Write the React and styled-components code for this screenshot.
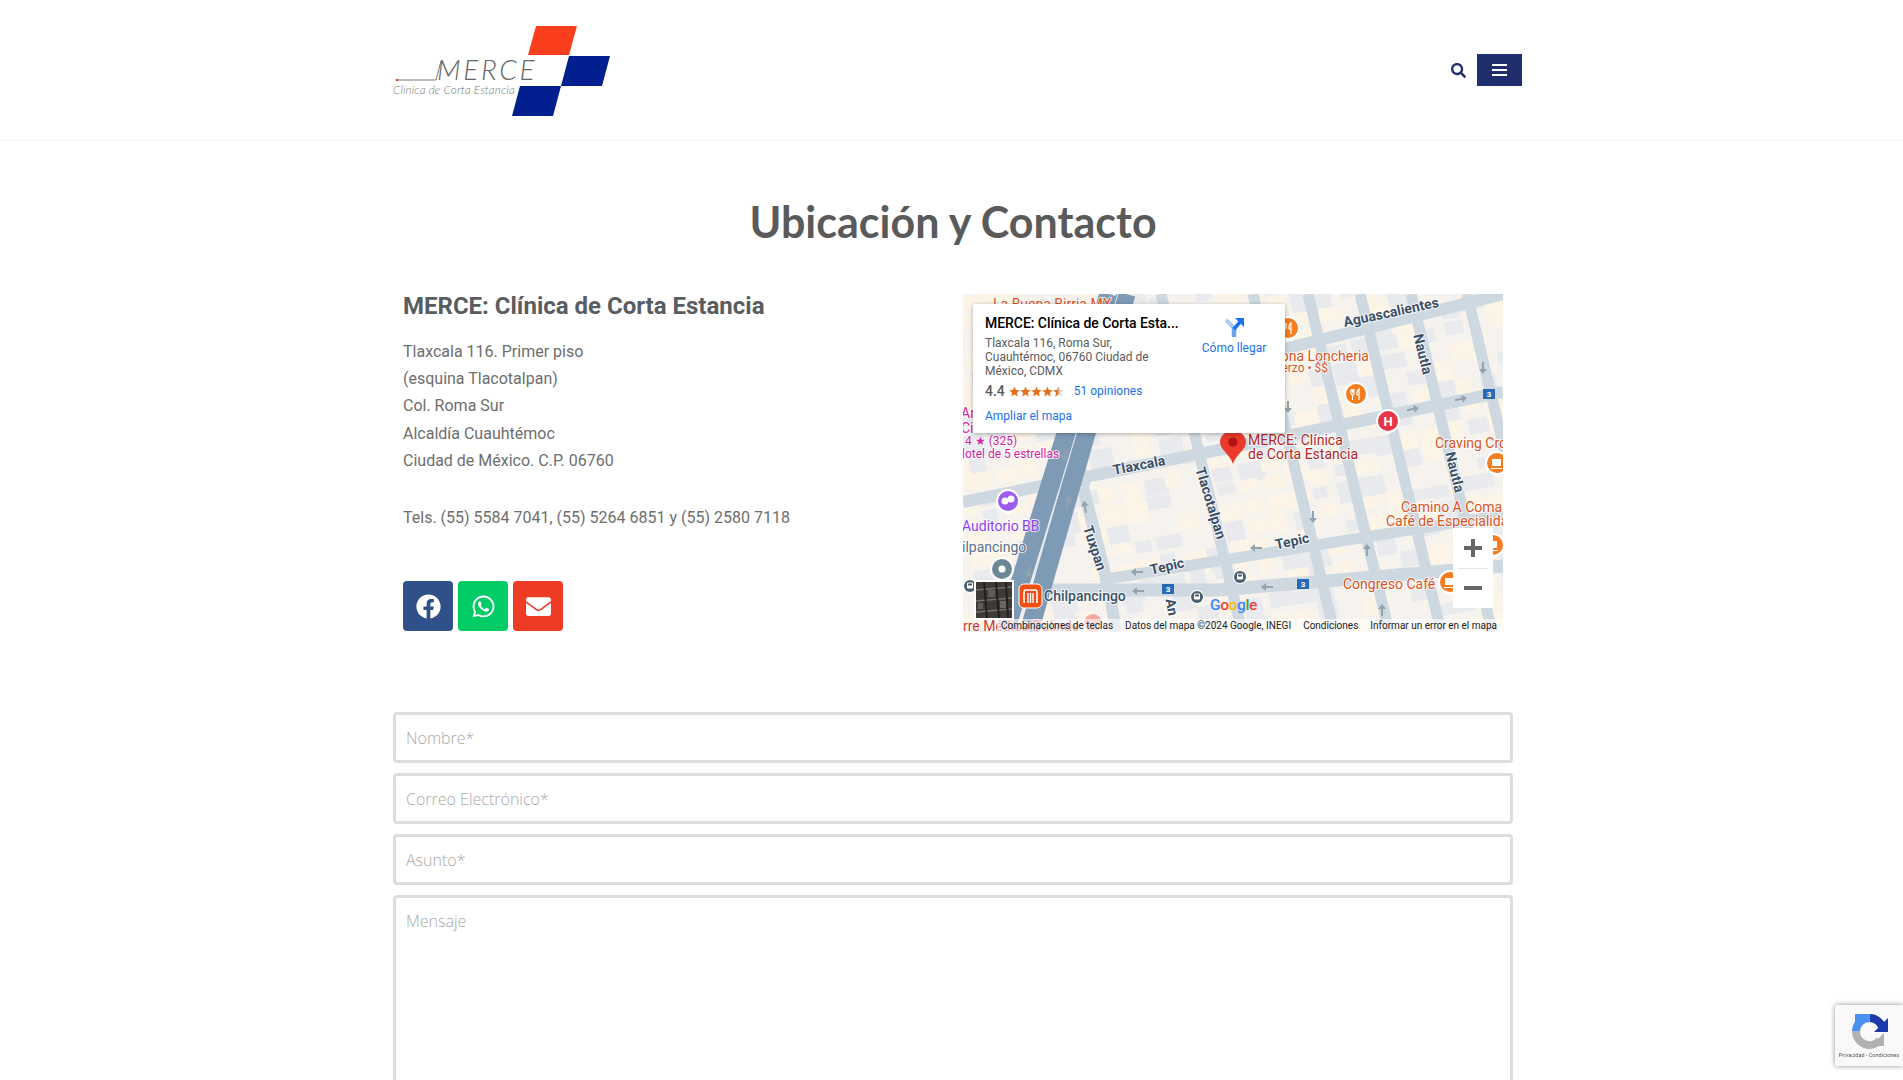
import React from 'react';
import styled, { createGlobalStyle } from 'styled-components';
import { FaFacebook, FaWhatsapp, FaEnvelope, FaSearch } from 'react-icons/fa';

const GlobalStyle = createGlobalStyle`
  html, body {
    margin: 0;
    padding: 0;
    background: #fff;
    font-family: Roboto, "Liberation Sans", sans-serif;
    overflow-x: hidden;
  }
  * { box-sizing: border-box; }
`;

const Header = styled.header`
  height: 141px;
  border-bottom: 1px solid #f6f6f6;
`;

const HeaderInner = styled.div`
  width: 1130px;
  height: 140px;
  margin-left: 392px;
  display: flex;
  align-items: center;
  justify-content: space-between;
`;

const HeaderTools = styled.div`
  display: flex;
  align-items: center;
  gap: 11px;
  color: #202e6e;
`;

const MenuButton = styled.button`
  width: 45px;
  height: 32px;
  padding: 0;
  border: 0;
  background: #202e6e;
  display: flex;
  flex-direction: column;
  align-items: center;
  justify-content: center;
  gap: 3px;
`;

const MenuBar = styled.span`
  display: block;
  width: 15px;
  height: 2px;
  background: #fff;
`;

const Main = styled.main`
  width: 1120px;
  margin-left: 393px;
`;

const Title = styled.h1`
  margin: 54px 0 0;
  text-align: center;
  font-family: Lato, "Open Sans", sans-serif;
  font-weight: 700;
  font-size: 43px;
  line-height: 54px;
  color: #5a5a5a;
`;

const Columns = styled.section`
  display: grid;
  grid-template-columns: 560px 560px;
  margin-top: 45px;
`;

const InfoColumn = styled.div`
  padding: 0 10px;
`;

const ClinicName = styled.h2`
  margin: 0;
  font-size: 24px;
  line-height: 25px;
  font-weight: 700;
  color: #595c61;
`;

const Address = styled.p`
  margin: 19px 0 0;
  font-size: 16px;
  line-height: 27.2px;
  color: #6e6e6e;
`;

const Phones = styled.p`
  margin: 30px 0 0;
  font-size: 16px;
  line-height: 27.2px;
  color: #6e6e6e;
`;

const SocialRow = styled.div`
  display: flex;
  gap: 5px;
  margin-top: 50px;
`;

const SocialButton = styled.a`
  width: 50px;
  height: 50px;
  border-radius: 4px;
  background: ${p => p.$bg};
  color: #fff;
  display: flex;
  align-items: center;
  justify-content: center;
  font-size: 25px;
`;

const MapColumn = styled.div`
  padding: 0 10px;
`;

const MapFrame = styled.div`
  position: relative;
  width: 540px;
  height: 338px;
  overflow: hidden;
  background: #f6f3ee;
`;

const MapSvg = styled.svg`
  display: block;
  font-family: Roboto, "Liberation Sans", sans-serif;
`;

const MapLabel = styled.text`
  font-size: ${p => p.$size || 14}px;
  font-weight: ${p => p.$weight || 400};
  fill: ${p => p.$color || '#3c4f66'};
  stroke: #fff;
  stroke-width: 2px;
  stroke-opacity: 0.8;
  paint-order: stroke;
  stroke-linejoin: round;
`;

const InfoCard = styled.div`
  position: absolute;
  left: 10px;
  top: 10px;
  width: 312px;
  height: 129px;
  background: #fff;
  box-shadow: 0 1px 4px rgba(0, 0, 0, 0.3);
  border-radius: 2px;
  padding: 10px 0 0 12px;
  display: grid;
  grid-template-columns: 198px 102px;
`;

const CardTitle = styled.div`
  font-size: 14px;
  line-height: 18px;
  font-weight: 500;
  color: #000;
  white-space: nowrap;
  letter-spacing: -0.05px;
`;

const CardAddress = styled.div`
  margin-top: 4px;
  font-size: 12px;
  line-height: 14px;
  color: #5b5b5b;
`;

const RatingRow = styled.div`
  display: flex;
  align-items: center;
  margin-top: 5px;
  height: 16px;
`;

const RatingValue = styled.span`
  font-size: 14px;
  font-weight: 500;
  color: #5b5b5b;
  margin-right: 4px;
`;

const CardLink = styled.a`
  font-size: 12px;
  color: #1a73e8;
  white-space: nowrap;
`;

const ReviewsLink = styled(CardLink)`
  margin-left: 10px;
`;

const EnlargeLink = styled(CardLink)`
  display: block;
  margin-top: 10px;
  line-height: 14px;
`;

const Directions = styled.div`
  display: flex;
  flex-direction: column;
  align-items: center;
  gap: 4px;
  padding-top: 3px;
`;

const ZoomControls = styled.div`
  position: absolute;
  right: 10px;
  top: 234px;
  width: 40px;
  height: 80px;
  background: #fff;
  display: flex;
  flex-direction: column;
`;

const ZoomButton = styled.div`
  flex: 1;
  display: flex;
  align-items: center;
  justify-content: center;
  border-top: ${p => (p.$divided ? '1px solid #e6e6e6' : '0')};
  margin: 0 5px;
`;

const Thumbnail = styled.div`
  position: absolute;
  left: 11px;
  top: 286px;
  width: 40px;
  height: 40px;
  border: 2px solid #fff;
  background: #35312f;
  overflow: hidden;
`;

const Attribution = styled.div`
  position: absolute;
  left: 34px;
  right: 0;
  top: 325px;
  height: 13px;
  display: flex;
  align-items: center;
  padding-left: 4px;
  background: rgba(255, 255, 255, 0.6);
  font-size: 10px;
  line-height: 13px;
  color: #222;
  white-space: nowrap;
`;

const AttributionItem = styled.span`
  margin-left: ${p => p.$gap || 0}px;
`;

const ContactForm = styled.form`
  display: flex;
  flex-direction: column;
  gap: 10px;
  margin-top: 80px;
`;

const fieldStyles = `
  display: block;
  width: 100%;
  border: 3px solid #ddd;
  border-radius: 4px;
  background: #fff;
  padding: 0 10px;
  font-family: "Open Sans", Lato, sans-serif;
  font-weight: 300;
  font-size: 16px;
  color: #555;
  outline: 0;
  &::placeholder { color: #a9a9a9; opacity: 1; }
`;

const TextField = styled.input`
  ${fieldStyles}
  height: 51px;
`;

const MessageField = styled.textarea`
  ${fieldStyles}
  height: 230px;
  padding-top: 12px;
  resize: none;
`;

const RecaptchaBadge = styled.div`
  position: fixed;
  right: 0;
  top: 1005px;
  width: 68px;
  height: 61px;
  background: #f9f9f9;
  border-radius: 2px 0 0 2px;
  box-shadow: 0 0 5px rgba(128, 128, 128, 0.9);
  display: flex;
  flex-direction: column;
  align-items: center;
  padding-top: 8px;
`;

const RecaptchaText = styled.span`
  font-size: 5.5px;
  line-height: 9px;
  margin-top: 1px;
  color: #555;
  white-space: nowrap;
`;

const Logo = () => (
  <svg width="222" height="100" viewBox="392 20 222 100">
    <polygon points="536,26 577,26 569,55 528,55" fill="#fb3e1e" />
    <polygon points="569,56 610,56 602,86 561,86" fill="#011f8f" />
    <polygon points="520,86 561,86 553,116 512,116" fill="#011f8f" />
    <circle cx="397" cy="80" r="1.3" fill="#fb3e1e" />
    <path d="M398 80 H436 L441 61" fill="none" stroke="#777" strokeWidth="1" />
    <text
      x="437"
      y="80"
      fontFamily="Lato, sans-serif"
      fontStyle="italic"
      fontWeight="300"
      fontSize="28"
      letterSpacing="2.6"
      fill="#666"
    >
      MERCE
    </text>
    <text
      x="393"
      y="94"
      fontFamily="Lato, sans-serif"
      fontStyle="italic"
      fontWeight="300"
      fontSize="11.6"
      letterSpacing="0.15"
      fill="#777"
    >
      Clínica de Corta Estancia
    </text>
  </svg>
);

const buildings = (() => {
  let seed = 17;
  const rand = () => {
    seed = (seed * 9301 + 49297) % 233280;
    return seed / 233280;
  };
  const list = [];
  for (let u = -80; u < 640; u += 23) {
    for (let v = 0; v < 460; v += 19) {
      const r = rand();
      if (r > 0.75) continue;
      list.push({
        u: u + rand() * 4,
        v: v + rand() * 4,
        w: 14 + rand() * 12,
        h: 10 + rand() * 12,
        fill: r < 0.36 ? '#e8eaee' : '#fcf4e7',
      });
    }
  }
  return list;
})();

const eastWestRoads = [
  [230, 78, 540, 0, 12],
  [0, 208, 540, 98, 12],
  [137, 286, 540, 221, 11],
  [87, 296, 257, 296, 13],
  [257, 296, 540, 272, 13],
];

const northSouthRoads = [198, 290, 345, 397, 448, 504].map(x0 => [
  x0,
  0,
  x0 + 0.24 * 338,
  338,
  11,
]);

const arrows = [
  [325, 113, 90],
  [450, 115, -12],
  [498, 105, -12],
  [520, 74, 90],
  [105, 208, -70],
  [122, 213, -100],
  [66, 278, 110],
  [174, 278, 180],
  [175, 297, 180],
  [350, 223, 90],
  [293, 254, 180],
  [404, 256, -90],
  [304, 293, 180],
  [419, 316, -90],
  [102, 161, 110],
];

const roadLabels = [
  ['Aguascalientes', 428, 23, -12],
  ['Nautla', 460, 65, 76],
  ['Nautla', 492, 183, 76],
  ['Tlaxcala', 176, 176, -11],
  ['Tlacotalpan', 248, 214, 73],
  ['Tuxpan', 132, 259, 72],
  ['Tepic', 204, 277, -13],
  ['Tepic', 329, 252, -12],
  ['An', 209, 318, 80],
];

const shields = [
  [526, 100],
  [205, 295],
  [340, 290],
];

const restaurantMarkers = [
  [325, 34],
  [393, 100],
];

const cafeMarkers = [
  [534, 169],
  [487, 288],
  [530, 251],
];

const busStops = [
  [277, 283],
  [234, 303],
  [7, 292],
];

const OneWayArrow = ({ x, y, angle }) => (
  <path
    d="M-6 -1 H1 V-4 L6 0 L1 4 V1 H-6 Z"
    fill="#93a3ae"
    transform={`translate(${x} ${y}) rotate(${angle})`}
  />
);

const Marker = ({ x, y, color, children }) => (
  <g transform={`translate(${x} ${y})`}>
    <path d="M-7 8 L0 14 L7 8 Z" fill="#fff" />
    <circle r="12" fill="#fff" />
    <circle r="10" fill={color} />
    {children}
  </g>
);

const MapDrawing = () => (
  <MapSvg width="540" height="338" viewBox="0 0 540 338">
    <rect width="540" height="338" fill="#f6f3ee" />
    <g transform="matrix(1 -0.19 0.24 1 0 0)">
      {buildings.map((b, i) => (
        <rect key={i} x={b.u} y={b.v} width={b.w} height={b.h} fill={b.fill} />
      ))}
    </g>
    {eastWestRoads.concat(northSouthRoads).map(([x1, y1, x2, y2, w], i) => (
      <line
        key={i}
        x1={x1}
        y1={y1}
        x2={x2}
        y2={y2}
        stroke="#cdd8e1"
        strokeWidth={w}
      />
    ))}
    <path
      d="M120 193 Q124 182 116 178 M120 193 L147 299 L153 338"
      fill="none"
      stroke="#cdd8e1"
      strokeWidth="12"
    />
    <line x1="146" y1="0" x2="42" y2="338" stroke="#7e9ab5" strokeWidth="19" />
    <line x1="163" y1="0" x2="66" y2="338" stroke="#7e9ab5" strokeWidth="19" />
    <line x1="155" y1="0" x2="54" y2="338" stroke="#e2e8ee" strokeWidth="1" />

    {arrows.map(([x, y, a], i) => (
      <OneWayArrow key={i} x={x} y={y} angle={a} />
    ))}

    {shields.map(([x, y], i) => (
      <g key={i}>
        <rect x={x - 6} y={y - 5} width="12" height="10" fill="#2a6ab5" />
        <text
          x={x}
          y={y + 3}
          textAnchor="middle"
          fontSize="8"
          fontWeight="700"
          fill="#fff"
        >
          3
        </text>
      </g>
    ))}

    {roadLabels.map(([t, x, y, a], i) => (
      <MapLabel
        key={i}
        x={x}
        y={y}
        $weight={700}
        textAnchor="middle"
        transform={`rotate(${a} ${x} ${y - 5})`}
      >
        {t}
      </MapLabel>
    ))}

    <MapLabel x="30" y="15" $color="#d9541e">
      La Buena Birria MX
    </MapLabel>
    <MapLabel x="406" y="67" textAnchor="end" $color="#d9541e">
      ona Loncheria
    </MapLabel>
    <MapLabel x="365" y="78" $size={12} textAnchor="end" $color="#d9541e">
      erzo • $$
    </MapLabel>
    <MapLabel x="472" y="154" $color="#d9541e">
      Craving Cro
    </MapLabel>
    <MapLabel x="438" y="218" $color="#d9541e">
      Camino A Coma
    </MapLabel>
    <MapLabel x="423" y="232" $color="#d9541e">
      Café de Especialida
    </MapLabel>
    <MapLabel x="380" y="295" $color="#d9541e">
      Congreso Café
    </MapLabel>

    <MapLabel x="285" y="151" $color="#b3261e">
      MERCE: Clínica
    </MapLabel>
    <MapLabel x="285" y="165" $color="#b3261e">
      de Corta Estancia
    </MapLabel>

    <MapLabel x="-2" y="124" $color="#d6249f">
      An
    </MapLabel>
    <MapLabel x="-2" y="139" $color="#d6249f">
      Cit
    </MapLabel>
    <MapLabel x="2" y="151" $size={12} $color="#d6249f">
      4 ★ (325)
    </MapLabel>
    <MapLabel x="-1" y="164" $size={12} $color="#d6249f">
      lotel de 5 estrellas
    </MapLabel>
    <MapLabel x="-1" y="237" $color="#8a3ff0">
      Auditorio BB
    </MapLabel>
    <MapLabel x="-1" y="258" $color="#5a7186">
      ilpancingo
    </MapLabel>
    <MapLabel x="81" y="307" $weight={500} $color="#3c5267">
      Chilpancingo
    </MapLabel>
    <MapLabel x="0" y="337" $color="#d0342c">
      rre Médica Dalinde
    </MapLabel>

    {restaurantMarkers.map(([x, y], i) => (
      <Marker key={i} x={x} y={y} color="#f57c1f">
        <path
          d="M-5 -5 V-1 Q-5 1 -3.5 1 V6 M-3.5 -5 V-1 M-2 -5 V-1 Q-2 1 -3.5 1 M3 6 V-5 Q0.5 -3 1 1 H3"
          fill="none"
          stroke="#fff"
          strokeWidth="1.2"
        />
      </Marker>
    ))}
    {cafeMarkers.map(([x, y], i) => (
      <Marker key={i} x={x} y={y} color="#f57c1f">
        <path d="M-5 -4 H4 V2 Q4 3 3 3 H-4 Q-5 3 -5 2 Z M-6 5 H5 V6 H-6 Z" fill="#fff" />
      </Marker>
    ))}
    <Marker x={425} y={127} color="#e8344a">
      <text y="5" textAnchor="middle" fontSize="13" fontWeight="700" fill="#fff">
        H
      </text>
    </Marker>
    <Marker x={45} y={207} color="#9c5cf0">
      <circle cx="-3" cy="0" r="3.5" fill="#fff" />
      <circle cx="3" cy="-2" r="3.5" fill="#fff" />
    </Marker>
    <Marker x={39} y={275} color="#6e8794">
      <circle r="3.5" fill="#fff" />
    </Marker>
    {busStops.map(([x, y], i) => (
      <g key={i}>
        <circle cx={x} cy={y} r="7" fill="#fff" />
        <circle cx={x} cy={y} r="6" fill="#4a5f70" />
        <rect x={x - 3} y={y - 3.5} width="6" height="6" rx="1" fill="#fff" />
        <rect x={x - 2} y={y - 2.5} width="4" height="2" fill="#4a5f70" />
      </g>
    ))}

    <g transform="translate(56 290)">
      <rect width="23" height="24" rx="5" fill="#f04e14" stroke="#fff" strokeWidth="1" />
      <path d="M5 19 V8 Q5 6 7 6 H16 Q18 6 18 8 V19" fill="none" stroke="#fff" strokeWidth="1.6" />
      <path d="M9 19 V9 M11.5 19 V9 M14 19 V9" stroke="#fff" strokeWidth="1.4" />
    </g>

    <g transform="translate(270 137)">
      <path
        d="M0 0 C-8 0 -13 5 -13 11 C-13 19 -3 23 0 33 C3 23 13 19 13 11 C13 5 8 0 0 0 Z"
        fill="#ea3a2d"
      />
      <circle cy="11" r="4.6" fill="#b31412" />
    </g>

    <circle cx="130" cy="329" r="9" fill="#f4a9a4" />

    <text x="247" y="316" fontSize="15.5" fontWeight="500" letterSpacing="-0.4">
      <tspan fill="#4285f4">G</tspan>
      <tspan fill="#ea4335">o</tspan>
      <tspan fill="#fbbc05">o</tspan>
      <tspan fill="#4285f4">g</tspan>
      <tspan fill="#34a853">l</tspan>
      <tspan fill="#ea4335">e</tspan>
    </text>
  </MapSvg>
);

const Star = ({ half }) => (
  <svg width="11" height="11" viewBox="0 0 20 20">
    <polygon
      points="10,1 12.7,7.2 19.5,7.8 14.4,12.3 15.9,19 10,15.5 4.1,19 5.6,12.3 0.5,7.8 7.3,7.2"
      fill={half ? '#d5d5d5' : '#e7711b'}
    />
    {half && (
      <polygon
        points="10,1 10,15.5 4.1,19 5.6,12.3 0.5,7.8 7.3,7.2"
        fill="#e7711b"
      />
    )}
  </svg>
);

const DirectionsIcon = () => (
  <svg width="19" height="20" viewBox="0 0 19 20">
    <path d="M1 3 L9 11" stroke="#a8cbf5" strokeWidth="4" fill="none" />
    <path d="M9 10 V20" stroke="#6ba4ec" strokeWidth="4.5" fill="none" />
    <path d="M9 12 L15 5" stroke="#1a73e8" strokeWidth="3.5" fill="none" />
    <polygon points="10,1 19,1 19,10" fill="#1a73e8" />
  </svg>
);

const SatelliteTile = () => (
  <svg width="36" height="36" viewBox="0 0 36 36">
    <rect width="36" height="36" fill="#3f3a38" />
    <path d="M0 8 L36 5 M0 19 L36 16 M0 30 L36 27" stroke="#756f6b" strokeWidth="1.5" />
    <path d="M8 0 L11 36 M20 0 L23 36 M30 0 L32 36" stroke="#22201f" strokeWidth="2" />
    <rect x="12" y="8" width="7" height="7" fill="#625c58" />
    <rect x="24" y="19" width="6" height="7" fill="#6d6763" />
    <rect x="2" y="21" width="5" height="6" fill="#625c58" />
  </svg>
);

const RecaptchaLogo = () => (
  <svg width="37" height="37" viewBox="0 0 37 37">
    <path d="M18.5 5 A13.5 13.5 0 0 1 32 18.5" fill="none" stroke="#1c3aa9" strokeWidth="8" />
    <polygon points="37,5 37,19 23,19" fill="#1c3aa9" />
    <path d="M5 18.5 A13.5 13.5 0 0 1 18.5 5" fill="none" stroke="#4a90f0" strokeWidth="8" />
    <polygon points="4,1 17,1 4,14" fill="#4a90f0" />
    <path d="M5 18.5 A13.5 13.5 0 0 0 29 27" fill="none" stroke="#b1b1b1" strokeWidth="8" />
    <polygon points="33,33 20,33 33,20" fill="#b1b1b1" />
  </svg>
);

const App = () => {
  return (
    <>
      <GlobalStyle />
      <Header>
        <HeaderInner>
          <Logo />
          <HeaderTools>
            <FaSearch size={15} />
            <MenuButton aria-label="Menu">
              <MenuBar />
              <MenuBar />
              <MenuBar />
            </MenuButton>
          </HeaderTools>
        </HeaderInner>
      </Header>

      <Main>
        <Title>Ubicación y Contacto</Title>

        <Columns>
          <InfoColumn>
            <ClinicName>MERCE: Clínica de Corta Estancia</ClinicName>
            <Address>
              Tlaxcala 116. Primer piso
              <br />
              (esquina Tlacotalpan)
              <br />
              Col. Roma Sur
              <br />
              Alcaldía Cuauhtémoc
              <br />
              Ciudad de México. C.P. 06760
            </Address>
            <Phones>Tels. (55) 5584 7041, (55) 5264 6851 y (55) 2580 7118</Phones>
            <SocialRow>
              <SocialButton $bg="#2f5088" aria-label="Facebook">
                <FaFacebook />
              </SocialButton>
              <SocialButton $bg="#00cc66" aria-label="WhatsApp">
                <FaWhatsapp />
              </SocialButton>
              <SocialButton $bg="#ee3b24" aria-label="Correo">
                <FaEnvelope />
              </SocialButton>
            </SocialRow>
          </InfoColumn>

          <MapColumn>
            <MapFrame>
              <MapDrawing />
              <InfoCard>
                <div>
                  <CardTitle>MERCE: Clínica de Corta Esta...</CardTitle>
                  <CardAddress>
                    Tlaxcala 116, Roma Sur,
                    <br />
                    Cuauhtémoc, 06760 Ciudad de
                    <br />
                    México, CDMX
                  </CardAddress>
                  <RatingRow>
                    <RatingValue>4.4</RatingValue>
                    <Star />
                    <Star />
                    <Star />
                    <Star />
                    <Star half />
                    <ReviewsLink>51 opiniones</ReviewsLink>
                  </RatingRow>
                  <EnlargeLink>Ampliar el mapa</EnlargeLink>
                </div>
                <Directions>
                  <DirectionsIcon />
                  <CardLink>Cómo llegar</CardLink>
                </Directions>
              </InfoCard>
              <ZoomControls>
                <ZoomButton>
                  <svg width="18" height="18" viewBox="0 0 18 18">
                    <path d="M7 0 H11 V7 H18 V11 H11 V18 H7 V11 H0 V7 H7 Z" fill="#666" />
                  </svg>
                </ZoomButton>
                <ZoomButton $divided>
                  <svg width="18" height="18" viewBox="0 0 18 18">
                    <rect y="7" width="18" height="4" fill="#666" />
                  </svg>
                </ZoomButton>
              </ZoomControls>
              <Thumbnail>
                <SatelliteTile />
              </Thumbnail>
              <Attribution>
                <AttributionItem>Combinaciones de teclas</AttributionItem>
                <AttributionItem $gap={12}>
                  Datos del mapa ©2024 Google, INEGI
                </AttributionItem>
                <AttributionItem $gap={12}>Condiciones</AttributionItem>
                <AttributionItem $gap={12}>
                  Informar un error en el mapa
                </AttributionItem>
              </Attribution>
            </MapFrame>
          </MapColumn>
        </Columns>

        <ContactForm>
          <TextField placeholder="Nombre*" />
          <TextField placeholder="Correo Electrónico*" />
          <TextField placeholder="Asunto*" />
          <MessageField placeholder="Mensaje" />
        </ContactForm>
      </Main>

      <RecaptchaBadge>
        <RecaptchaLogo />
        <RecaptchaText>Privacidad - Condiciones</RecaptchaText>
      </RecaptchaBadge>
    </>
  );
};

export default App;
